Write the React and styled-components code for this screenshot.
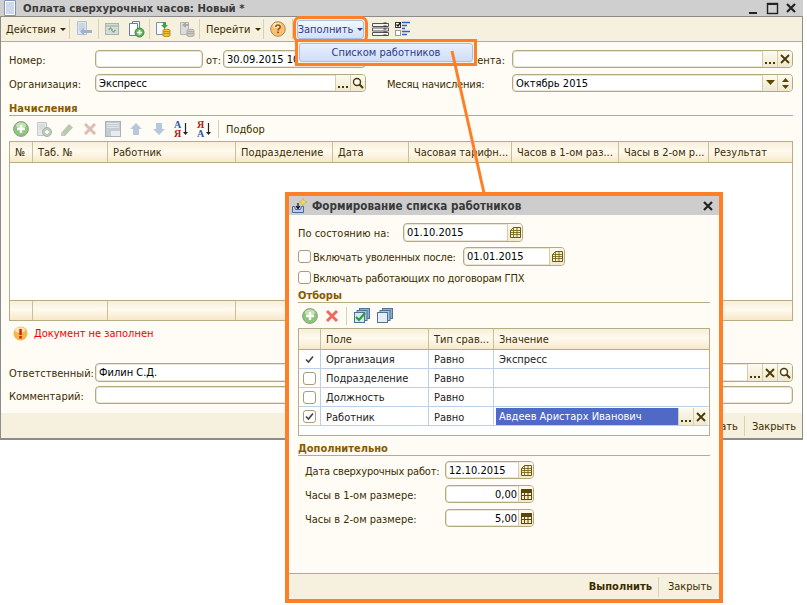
import React from 'react';
import styled, { createGlobalStyle } from 'styled-components';

const Global = createGlobalStyle`
  html, body { margin: 0; background: #fff; }
  * { box-sizing: border-box; }
  body { font-family: "DejaVu Sans Condensed", "DejaVu Sans", sans-serif; font-size: 11px; color: #3d2c00; }
`;

const Page = styled.div`
  position: relative;
  width: 805px;
  height: 605px;
  overflow: hidden;
`;
const Win = styled.div`
  position: absolute;
  left: 0;
  top: 0;
  width: 803px;
  height: 440px;
  display: flex;
  flex-direction: column;
  background: #fffcf5;
  border-left: 1px solid #8c8c8c;
  border-right: 1px solid #8c8c8c;
  border-bottom: 2px solid #8c8c8c;
`;
const TitleBar = styled.div`
  height: 16px;
  flex: none;
  margin-left: -1px;
  margin-right: -1px;
  background: #cfcfcf;
  display: flex;
  align-items: center;
  padding-left: 3px;
  gap: 6px;
`;
const TitleText = styled.div`
  font-weight: bold;
  font-size: ${p => p.$size}px;
  color: #3a3a3a;
  flex: 1;
  white-space: nowrap;
`;
const WinControls = styled.div`
  display: flex;
  gap: 6px;
  padding-right: 6px;
`;
const Toolbar = styled.div`
  height: 26px;
  flex: none;
  display: flex;
  align-items: center;
  background: #f6f1df;
  border-bottom: 1px solid #b7ad85;
  border-top: 1px solid #8c8c8c;
`;
const ToolCell = styled.div`
  width: ${p => p.$w}px;
  height: 100%;
  flex: none;
  display: flex;
  align-items: center;
  justify-content: ${p => p.$pl ? 'flex-start' : 'center'};
  padding-left: ${p => p.$pl || 0}px;
  gap: 4px;
  margin-left: ${p => p.$ml || 0}px;
  white-space: nowrap;
`;
const Sep = styled.div`
  width: 1px;
  height: ${p => p.$h || 20}px;
  flex: none;
  margin-left: ${p => p.$ml || 0}px;
  margin-right: ${p => p.$mr || 0}px;
  background: #d8d1b4;
`;
const Caret = styled.span`
  width: 0;
  height: 0;
  border-left: 3px solid transparent;
  border-right: 3px solid transparent;
  border-top: 3px solid ${p => p.$c || '#3d2c00'};
  margin-top: 1px;
`;
const FillButton = styled.div`
  width: 67px;
  height: 19px;
  flex: none;
  margin-left: 4px;
  display: flex;
  align-items: center;
  justify-content: center;
  gap: 4px;
  color: #2e3a8c;
  white-space: nowrap;
  border: 1px solid #a8c0e8;
  border-radius: 3px;
  background: linear-gradient(#f4f8ff, #d2e0f8);
  outline: 3px solid #ff7f27;
  outline-offset: 1px;
`;
const Body = styled.div`
  flex: 1;
  min-height: 0;
  padding: 8px 9px 0 8px;
  display: flex;
  flex-direction: column;
`;
const Row = styled.div`
  height: ${p => p.$h || 18}px;
  flex: none;
  display: flex;
  align-items: center;
  margin-top: ${p => p.$mt || 0}px;
  padding-left: ${p => p.$pl || 0}px;
`;
const Label = styled.div`
  width: ${p => p.$w}px;
  flex: none;
  white-space: nowrap;
  text-align: ${p => p.$right ? 'right' : 'left'};
  margin-left: ${p => p.$ml || 0}px;
  padding-top: 2px;
  padding-right: ${p => p.$pr || 0}px;
  letter-spacing: ${p => p.$tight ? '-0.2px' : '0'};
`;
const Field = styled.div`
  width: ${p => p.$w ? p.$w + 'px' : 'auto'};
  flex: ${p => p.$w ? 'none' : '1'};
  height: 100%;
  display: flex;
  align-items: stretch;
  background: #fff;
  border: 1px solid #b3a97e;
  border-radius: 4px;
  overflow: hidden;
  box-shadow: inset 0 0 0 1px #ebe6d3;
`;
const FieldText = styled.div`
  flex: 1;
  min-width: 0;
  padding: 1px ${p => p.$right ? '1px' : '2px'} 0 3px;
  color: #000;
  line-height: 16px;
  white-space: nowrap;
  overflow: hidden;
  text-align: ${p => p.$right ? 'right' : 'left'};
`;
const FieldBtn = styled.div`
  width: 15px;
  flex: none;
  display: flex;
  align-items: center;
  justify-content: center;
  border-left: 1px solid #d5cdac;
  background: linear-gradient(#fcfaf0, #efe9d0);
`;
const Heading = styled.div`
  height: 15px;
  flex: none;
  font-weight: bold;
  color: #8a5a00;
  line-height: 15px;
  border-bottom: 1px solid #b7ad85;
  margin-top: ${p => p.$mt || 0}px;
`;
const IconBar = styled.div`
  height: ${p => p.$h}px;
  flex: none;
  display: flex;
  align-items: center;
  padding-left: ${p => p.$pl}px;
  gap: ${p => p.$gap}px;
`;
const BarLabel = styled.span`
  padding-top: 2px;
`;
const Table = styled.div`
  height: ${p => p.$h}px;
  flex: none;
  display: flex;
  flex-direction: column;
  border: 1px solid #b7ad85;
  background: #fff;
`;
const GridRow = styled.div`
  display: grid;
  grid-template-columns: ${p => p.$cols};
  height: ${p => p.$h}px;
  flex: none;
  border-bottom: 1px solid ${p => p.$line || '#b7ad85'};
`;
const HeadRow = styled(GridRow)`
  background: linear-gradient(#f7efd9, #fffaf0 45%, #f7e9c8);
`;
const FootRow = styled(GridRow)`
  border-bottom: 0;
  border-top: 1px solid #b7ad85;
  margin-top: auto;
  height: 20px;
  background: linear-gradient(#f7efd9, #fffaf0 45%, #f7e9c8);
`;
const HeadCell = styled.div`
  padding-left: 5px;
  line-height: 21px;
  white-space: nowrap;
  overflow: hidden;
  border-right: 1px solid ${p => p.$last ? 'transparent' : '#c9bf98'};
`;
const Cell = styled.div`
  padding: 2px 0 0 5px;
  line-height: 16px;
  color: #222;
  white-space: nowrap;
  overflow: hidden;
  border-right: 1px solid ${p => p.$last ? 'transparent' : '#bcd0e8'};
  display: flex;
  align-items: center;
`;
const CheckCell = styled(Cell)`
  padding: 0;
  justify-content: center;
`;
const Box = styled.span`
  width: 13px;
  height: 13px;
  flex: none;
  display: inline-flex;
  align-items: center;
  justify-content: center;
  background: #fff;
  border: 1px solid #a89d78;
  border-radius: 3px;
`;
const EditCell = styled.div`
  display: flex;
  align-items: stretch;
  padding: 1px 1px 1px 2px;
`;
const Selected = styled.div`
  flex: 1;
  background: #5069c6;
  color: #fff;
  line-height: 17px;
  padding-left: 3px;
  white-space: nowrap;
`;
const Status = styled.div`
  height: 16px;
  flex: none;
  margin-top: 4px;
  padding-left: 4px;
  display: flex;
  align-items: center;
  gap: 6px;
  color: #f00000;
`;
const BottomBar = styled.div`
  height: ${p => p.$h}px;
  flex: none;
  display: flex;
  align-items: center;
  justify-content: flex-end;
  padding-right: ${p => p.$pr}px;
  background: #f6f1df;
  border-top: 1px solid ${p => p.$line};
`;
const BarBtn = styled.div`
  font-weight: ${p => p.$bold ? 'bold' : 'normal'};
  white-space: nowrap;
  padding-left: ${p => p.$pl || 0}px;
  padding-right: ${p => p.$pr || 0}px;
`;
const Dialog = styled.div`
  position: absolute;
  left: 285px;
  top: 192px;
  width: 438px;
  height: 411px;
  display: flex;
  flex-direction: column;
  background: #fffcf5;
  border: 4px solid #ff7f27;
`;
const DialogTitle = styled.div`
  height: 19px;
  flex: none;
  background: #cdcdcd;
  display: flex;
  align-items: center;
  padding: 0 5px 0 2px;
  gap: 5px;
`;
const DialogBody = styled.div`
  flex: 1;
  min-height: 0;
  padding: 8px 9px 0 9px;
  display: flex;
  flex-direction: column;
`;
const CheckLabel = styled.div`
  margin-left: 2px;
  padding-top: 2px;
  width: ${p => p.$w ? p.$w + 'px' : 'auto'};
  white-space: nowrap;
  letter-spacing: -0.2px;
`;
const Menu = styled.div`
  position: absolute;
  left: 295px;
  top: 39px;
  width: 182px;
  height: 27px;
  border: 3px solid #ff7f27;
  background: #f4f0e0;
  padding: 1px;
`;
const MenuItem = styled.div`
  height: 100%;
  display: flex;
  align-items: center;
  justify-content: center;
  color: #2e3a8c;
  border: 1px solid #a8c0e8;
  border-radius: 3px;
  background: linear-gradient(#e9f0fd, #cfdef8);
`;
const Arrow = styled.svg`
  position: absolute;
  left: 0;
  top: 0;
  pointer-events: none;
`;

const Ic = ({ w = 16, h = 16, children }) => <svg width={w} height={h} viewBox={`0 0 ${w} ${h}`}>{children}</svg>;

const DocTitle = () => <Ic w={14} h={16}><path d="M1.5.5h11v15h-11z" fill="#fff" stroke="#7f96b8" /><path d="M3 3h8M3 5h8M3 7h8M3 9h8M3 11h8M3 13h8" stroke="#9db4d6" /></Ic>;
const Minimize = () => <Ic w={12} h={13}><rect x="1" y="10" width="8" height="2" fill="#222" /></Ic>;
const Maximize = () => <Ic w={13} h={13}><rect x="1.5" y="1.5" width="10" height="10" fill="none" stroke="#222" strokeWidth="1.4" /><path d="M1 2h11" stroke="#222" strokeWidth="2" /></Ic>;
const Close = ({ c = '#222' }) => <Ic w={12} h={12}><path d="M2 2l8 8M10 2l-8 8" stroke={c} strokeWidth="2.2" /></Ic>;
const DocArrow = () => <Ic><path d="M1.5 .5h9v13h-9z" fill="#dfe5ee" stroke="#b4c0d0" /><path d="M3 3h6M3 5h6M3 7h6M3 9h3" stroke="#b8c4d6" /><path d="M16 9v3H8v2.500L4 10.500 8 6.500V9z" fill="#9fb2cc" /></Ic>;
const Refresh = () => <Ic w={14} h={14}><rect x=".5" y="1.5" width="13" height="11" fill="#d4dcd8" stroke="#aab4ae" /><path d="M1 4h12" stroke="#b9c3bd" strokeWidth="2" /><path d="M3.500 8l2-2 2 2M6.500 8l2 2 2-2" stroke="#7fa98a" strokeWidth="1.300" fill="none" /></Ic>;
const DocsPlus = () => <Ic w={17} h={17}><path d="M4.5 .5h7v11h-7z" fill="#eef2f7" stroke="#6d8096" /><path d="M1.5 2.500h8v12h-8z" fill="#fff" stroke="#6d8096" /><circle cx="11.500" cy="11.500" r="4.500" fill="#62b358" stroke="#3f8a3a" /><path d="M9 11.500h5M11.500 9v5" stroke="#fff" strokeWidth="1.600" /></Ic>;
const DocCoins = ({ off }) => (
  <Ic>
    <path d="M1.500 1.500h8v12h-8z" fill={off ? '#dcdcdc' : '#f7f9fc'} stroke={off ? '#b4b4b4' : '#8090a8'} />
    <path d={off ? 'M7 1l-4 3 4 3V5h3V3H7z' : 'M8 1v3H6l3.500 3.500L13 4h-2V1z'} fill={off ? '#a8a8a8' : '#3fa142'} />
    <ellipse cx="11.500" cy="10" rx="3.800" ry="1.800" fill={off ? '#cfcabc' : '#f3c534'} stroke={off ? '#aaa' : '#b98a12'} />
    <ellipse cx="11.500" cy="12.200" rx="3.800" ry="1.800" fill={off ? '#cfcabc' : '#f3c534'} stroke={off ? '#aaa' : '#b98a12'} />
    <ellipse cx="11.500" cy="14" rx="3.800" ry="1.600" fill={off ? '#cfcabc' : '#f3c534'} stroke={off ? '#aaa' : '#b98a12'} />
  </Ic>
);
const Help = () => <Ic><circle cx="8" cy="8" r="7.300" fill="#f8c070" stroke="#b08a50" /><ellipse cx="7" cy="4.500" rx="4" ry="2.400" fill="#fde9c4" /><path d="M5.800 6c0-2.600 4.400-2.600 4.400 0 0 1.700-2.200 1.700-2.200 3.400" fill="none" stroke="#a04a00" strokeWidth="1.500" /><rect x="7.200" y="10.600" width="1.700" height="1.700" fill="#a04a00" /></Ic>;
const TableIc = () => <Ic w={17} h={15}><path d="M.5 1.500h16v3h-16zM.5 6h16v3h-16zM.5 10.500h16v3h-16z" fill="#f4f4f4" stroke="#555" /><path d="M13 .5v14" stroke="#333" strokeWidth="3" strokeDasharray="1 2" /></Ic>;
const CheckList = () => <Ic w={17} h={16}><rect x=".5" y="1.500" width="5" height="5" fill="#fff" stroke="#333" /><path d="M1.500 3.500l1.500 1.500 2.500-3.500" stroke="#111" strokeWidth="1.300" fill="none" /><rect x=".5" y="9.500" width="5" height="5" fill="#fff" stroke="#999" /><path d="M7 1.500h8M7 4.500h5M7 7.500h3M7 10.500h8M7 13.500h5" stroke="#2f63c8" strokeWidth="1.700" /></Ic>;
const PlusC = () => <Ic><circle cx="8" cy="8" r="7.400" fill="#8cc67a" stroke="#8f9c88" /><ellipse cx="8" cy="4.500" rx="5" ry="3" fill="#c4e4b4" /><path d="M8 4v8M4 8h8" stroke="#fff" strokeWidth="2.400" /></Ic>;
const DocPlusOff = () => <Ic><path d="M1.500 1.500h9v13h-9z" fill="#e4e8e8" stroke="#c4c8c8" /><path d="M3 4h6M3 6h6M3 8h4" stroke="#cdd2d2" /><circle cx="11" cy="11" r="4.500" fill="#bdc9bd" stroke="#a8b2a8" /><path d="M9 11h4M11 9v4" stroke="#fff" strokeWidth="1.400" /></Ic>;
const Pencil = () => <Ic><path d="M2 12l8-9 4 3.500-8 8.500H2z" fill="#b9c8b0" /><path d="M2 15l1-4 3 3z" fill="#d4ccb4" /></Ic>;
const XOff = () => <Ic><path d="M3 3l10 10M13 3L3 13" stroke="#dcbcb4" strokeWidth="3" /></Ic>;
const XRed = () => <Ic w={14} h={14}><path d="M2 2l10 10M12 2L2 12" stroke="#ee6a5e" strokeWidth="3" /></Ic>;
const SaveOff = () => <Ic><rect x=".5" y=".5" width="15" height="15" fill="#c4ccd4" stroke="#a8b0b8" /><path d="M2 2.500h12M2 4.500h12M2 6.500h12" stroke="#e2e6ea" /><rect x="6" y="10" width="9" height="5" fill="#e8ecee" /></Ic>;
const Up = () => <Ic><path d="M8 2l6 6h-3v6H5V8H2z" fill="#b8c8dc" /></Ic>;
const Down = () => <Ic><path d="M8 14L2 8h3V2h6v6h3z" fill="#b8c8dc" /></Ic>;
const Sort = ({ a, b, ca, cb }) => (
  <Ic w={16} h={17}>
    <text x="0" y="8" fontFamily="Liberation Serif" fontWeight="bold" fontSize="10" fill={ca}>{a}</text>
    <text x="0" y="16.500" fontFamily="Liberation Serif" fontWeight="bold" fontSize="10" fill={cb}>{b}</text>
    <path d="M11.500 3v10" stroke="#222" strokeWidth="1.200" /><path d="M9 12h5l-2.500 3z" fill="#222" />
  </Ic>
);
const Dots = () => <Ic w={10} h={10}><path d="M0 8h2v2H0zM4 8h2v2H4zM8 8h2v2H8z" fill="#4a3800" /></Ic>;
const XSmall = () => <Ic w={10} h={10}><path d="M1 1l8 8M9 1L1 9" stroke="#4a3800" strokeWidth="1.800" /></Ic>;
const Search = () => <Ic w={12} h={12}><circle cx="5" cy="5" r="3.500" fill="#fff" stroke="#4a3800" strokeWidth="1.400" /><path d="M7.500 7.500l3.500 3.500" stroke="#4a3800" strokeWidth="2" /></Ic>;
const DropDown = () => <Ic w={9} h={6}><path d="M0 0h9L4.500 5z" fill="#5c4600" /></Ic>;
const Spin = () => <Ic w={7} h={11}><path d="M3.500 0L7 4H0zM0 7h7l-3.500 4z" fill="#5c4600" /></Ic>;
const Cal = () => <Ic w={11} h={11}><path d="M3.500.5h7v10h-10V3.500z" fill="#f6efc8" stroke="#6b5a10" /><path d="M.5 3.500h10M.5 5.500h10M.5 7.500h10M3.500.5v10M7 .5v10" stroke="#6b5a10" strokeWidth=".8" /></Ic>;
const Calc = () => <Ic w={11} h={11}><rect x=".5" y=".5" width="10" height="10" fill="#f4eed6" stroke="#5c4600" /><rect x="1" y="1" width="9" height="3" fill="#5c4600" /><path d="M.5 6.500h10M3.500 4v6M7 4v6" stroke="#5c4600" /></Ic>;
const Warn = () => <Ic w={15} h={15}><circle cx="7.500" cy="7.500" r="7" fill="#f2b84b" /><ellipse cx="7" cy="4" rx="5" ry="2.800" fill="#fde4b0" /><rect x="6.300" y="3" width="2.500" height="6" fill="#d81e12" /><rect x="6.300" y="10" width="2.500" height="2.500" fill="#d81e12" /></Ic>;
const DlgIcon = () => <Ic><path d="M1.500 8.500h2l1 3h5l1-3h2v6h-11z" fill="#b8d0ee" stroke="#4a6a9a" /><path d="M7 5v5M5 8l2 2.500L9 8" stroke="#111" strokeWidth="1.200" fill="none" /><path d="M12 0l1.200 2.800L16 4l-2.800 1.200L12 8l-1.200-2.800L8 4l2.800-1.200z" fill="#f8dc50" stroke="#c8a830" strokeWidth=".5" /></Ic>;
const CheckOn = () => <Ic w={11} h={11}><path d="M2 5.500l2.500 2.500 4.500-5.500" fill="none" stroke="#444" strokeWidth="1.600" /></Ic>;
const Stack = ({ c, check }) => (
  <Ic>
    <rect x="5.500" y=".5" width="10" height="10" fill="#8eb0d0" stroke="#4e7394" />
    <rect x="3" y="2.500" width="10" height="10" fill="#a8c6e2" stroke="#4e7394" />
    <rect x=".5" y="4.500" width="10" height="10" fill={c} stroke="#4e7394" />
    {check && <path d="M2 9l3 3 6-7" fill="none" stroke="#27a030" strokeWidth="2.200" />}
  </Ic>
);

const mainCols = '23px 75px 128px 97px 76px 103px 107px 90px 1fr';
const dlgCols = '22px 108px 65px 1fr';
const mainHeads = ['№', 'Таб. №', 'Работник', 'Подразделение', 'Дата', 'Часовая тарифн...', 'Часов в 1-ом раз...', 'Часы в 2-ом р...', 'Результат'];

const rows = [
  { f: 'Организация', v: 'Экспресс', mark: 'plain' },
  { f: 'Подразделение', v: '', mark: 'empty' },
  { f: 'Должность', v: '', mark: 'empty' },
];

export default function App() {
  return (
    <Page>
      <Global />
      <Win>
        <TitleBar>
          <DocTitle />
          <TitleText $size={11.3}>Оплата сверхурочных часов: Новый *</TitleText>
          <WinControls><Minimize /><Maximize /><Close /></WinControls>
        </TitleBar>
        <Toolbar>
          <ToolCell $w={68} $pl={5}>Действия<Caret /></ToolCell><Sep />
          <ToolCell $w={28}><DocArrow /></ToolCell><Sep />
          <ToolCell $w={25}><Refresh /></ToolCell>
          <ToolCell $w={25}><DocsPlus /></ToolCell><Sep />
          <ToolCell $w={25}><DocCoins /></ToolCell>
          <ToolCell $w={24}><DocCoins off /></ToolCell><Sep />
          <ToolCell $w={63} $pl={6}>Перейти<Caret /></ToolCell><Sep />
          <ToolCell $w={28}><Help /></ToolCell><Sep />
          <FillButton>Заполнить<Caret $c="#2e3a8c" /></FillButton>
          <ToolCell $w={17} $ml={8}><TableIc /></ToolCell>
          <ToolCell $w={17} $ml={6}><CheckList /></ToolCell>
        </Toolbar>
        <Body>
          <Row>
            <Label $w={86}>Номер:</Label>
            <Field $w={108}><FieldText /></Field>
            <Label $w={17} $ml={3}>от:</Label>
            <Field $w={143}><FieldText>30.09.2015 10:00:00</FieldText></Field>
            <Label $w={146} $right $pr={7}>Вид документа:</Label>
            <Field>
              <FieldText />
              <FieldBtn><Dots /></FieldBtn>
              <FieldBtn><XSmall /></FieldBtn>
            </Field>
          </Row>
          <Row $mt={6}>
            <Label $w={86}>Организация:</Label>
            <Field $w={271}>
              <FieldText>Экспресс</FieldText>
              <FieldBtn><Dots /></FieldBtn>
              <FieldBtn><Search /></FieldBtn>
            </Field>
            <Label $w={125} $ml={21} $tight>Месяц начисления:</Label>
            <Field>
              <FieldText>Октябрь 2015</FieldText>
              <FieldBtn><DropDown /></FieldBtn>
              <FieldBtn><Spin /></FieldBtn>
            </Field>
          </Row>
          <Heading $mt={9}>Начисления</Heading>
          <IconBar $h={25} $pl={4} $gap={7}>
            <PlusC /><DocPlusOff /><Pencil /><XOff /><SaveOff /><Up /><Down />
            <Sort a="А" b="Я" ca="#2a5aa8" cb="#b02020" />
            <Sort a="Я" b="А" ca="#b02020" cb="#2a5aa8" />
            <Sep $h={18} $ml={-2} />
            <BarLabel>Подбор</BarLabel>
          </IconBar>
          <Table $h={180}>
            <HeadRow $cols={mainCols} $h={21}>
              {mainHeads.map((h, i) => <HeadCell key={h} $last={i === 8}>{h}</HeadCell>)}
            </HeadRow>
            <FootRow $cols={mainCols} $h={20}>
              {mainHeads.map((h, i) => <HeadCell key={h} $last={i === 8} />)}
            </FootRow>
          </Table>
          <Status><Warn />Документ не заполнен</Status>
          <Row $h={19} $mt={22}>
            <Label $w={86}>Ответственный:</Label>
            <Field>
              <FieldText>Филин С.Д.</FieldText>
              <FieldBtn><Dots /></FieldBtn>
              <FieldBtn><XSmall /></FieldBtn>
              <FieldBtn><Search /></FieldBtn>
            </Field>
          </Row>
          <Row $mt={4}>
            <Label $w={86}>Комментарий:</Label>
            <Field><FieldText /></Field>
          </Row>
        </Body>
        <BottomBar $h={25} $pr={6} $line="#f6f1df">
          <BarBtn $pr={6}>Записать</BarBtn><Sep />
          <BarBtn $pl={7}>Закрыть</BarBtn>
        </BottomBar>
      </Win>

      <Menu><MenuItem>Списком работников</MenuItem></Menu>

      <Arrow width="805" height="605" viewBox="0 0 805 605">
        <path d="M452 51L484 193" stroke="#ff7f27" strokeWidth="3" fill="none" />
      </Arrow>

      <Dialog>
        <DialogTitle>
          <DlgIcon />
          <TitleText $size={11.6}>Формирование списка работников</TitleText>
          <Close />
        </DialogTitle>
        <DialogBody>
          <Row $h={19}>
            <Label $w={105}>По состоянию на:</Label>
            <Field $w={120}><FieldText>01.10.2015</FieldText><FieldBtn><Cal /></FieldBtn></Field>
          </Row>
          <Row $h={19} $mt={5}>
            <Box />
            <CheckLabel $w={150}>Включать уволенных после:</CheckLabel>
            <Field $w={102}><FieldText>01.01.2015</FieldText><FieldBtn><Cal /></FieldBtn></Field>
          </Row>
          <Row $h={19} $mt={2}>
            <Box /><CheckLabel>Включать работающих по договорам ГПХ</CheckLabel>
          </Row>
          <Heading $mt={1}>Отборы</Heading>
          <IconBar $h={25} $pl={4} $gap={7}>
            <PlusC /><XRed /><Sep $h={18} /><Stack c="#d8e8f6" check /><Stack c="#e4eef8" />
          </IconBar>
          <Table $h={108}>
            <HeadRow $cols={dlgCols} $h={21}>
              <HeadCell />
              <HeadCell>Поле</HeadCell>
              <HeadCell>Тип срав...</HeadCell>
              <HeadCell $last>Значение</HeadCell>
            </HeadRow>
            {rows.map(r => (
              <GridRow key={r.f} $cols={dlgCols} $h={19} $line="#bcd0e8">
                <CheckCell>{r.mark === 'plain' ? <CheckOn /> : <Box />}</CheckCell>
                <Cell>{r.f}</Cell>
                <Cell>Равно</Cell>
                <Cell $last>{r.v}</Cell>
              </GridRow>
            ))}
            <GridRow $cols={dlgCols} $h={19} $line="#bcd0e8">
              <CheckCell><Box><CheckOn /></Box></CheckCell>
              <Cell>Работник</Cell>
              <Cell>Равно</Cell>
              <EditCell>
                <Selected>Авдеев Аристарх Иванович</Selected>
                <FieldBtn><Dots /></FieldBtn>
                <FieldBtn><XSmall /></FieldBtn>
              </EditCell>
            </GridRow>
          </Table>
          <Heading $mt={5}>Дополнительно</Heading>
          <Row $mt={5} $pl={7}>
            <Label $w={140} $tight>Дата сверхурочных работ:</Label>
            <Field $w={89}><FieldText>12.10.2015</FieldText><FieldBtn><Cal /></FieldBtn></Field>
          </Row>
          <Row $mt={6} $pl={7}>
            <Label $w={140}>Часы в 1-ом размере:</Label>
            <Field $w={89}><FieldText $right>0,00</FieldText><FieldBtn><Calc /></FieldBtn></Field>
          </Row>
          <Row $mt={6} $pl={7}>
            <Label $w={140}>Часы в 2-ом размере:</Label>
            <Field $w={89}><FieldText $right>5,00</FieldText><FieldBtn><Calc /></FieldBtn></Field>
          </Row>
        </DialogBody>
        <BottomBar $h={26} $pr={7} $line="#b7ad85">
          <BarBtn $bold $pr={6}>Выполнить</BarBtn><Sep />
          <BarBtn $pl={9}>Закрыть</BarBtn>
        </BottomBar>
      </Dialog>
    </Page>
  );
}
